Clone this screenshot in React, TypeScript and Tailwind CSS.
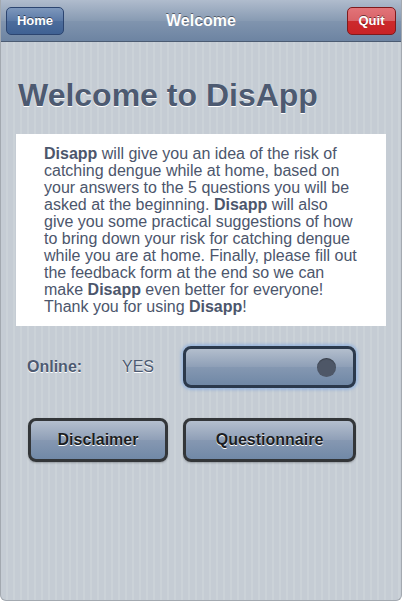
export default function App() {
  return (
    <div className="flex h-[601px] flex-col overflow-hidden rounded-b-[6px] border-x border-b border-[#a3a9b0] bg-[#cbd2d8] bg-[image:repeating-linear-gradient(90deg,#c5ccd4_0px,#c5ccd4_5px,#cbd2d8_5px,#cbd2d8_7px)] font-['Liberation_Sans',Arial,sans-serif]">
      {/* toolbar */}
      <div className="relative flex h-[42px] shrink-0 items-center justify-between border-b border-[#4b5b72] bg-[linear-gradient(#b0bccd,#889bb3_50%,#8195af_50%,#6d84a2)] px-[5px]">
        <button className="h-[28px] w-[58px] rounded-[5px] border border-[#2c4570] bg-[linear-gradient(#7d97bc,#5a79a6_50%,#4d6d9c_50%,#3f6193)] text-[13px] font-bold text-white [text-shadow:0_-1px_0_rgba(0,0,0,0.5)]">
          Home
        </button>
        <div className="pointer-events-none absolute left-0 right-0 top-[9px] text-center text-[16px] font-bold text-white [text-shadow:0_-1px_0_rgba(0,0,0,0.45)]">
          Welcome
        </div>
        <button className="h-[28px] w-[49px] rounded-[5px] border border-[#7e1a1c] bg-[linear-gradient(#e27479,#d86267_50%,#cc2a2c_50%,#c92326)] text-[13px] font-bold text-white [text-shadow:0_-1px_0_rgba(0,0,0,0.5)]">
          Quit
        </button>
      </div>

      <h1 className="mt-[36px] pl-[17px] text-[32px] font-bold leading-[35px] text-[#4d5a71] [text-shadow:0_1px_0_#ffffff]">
        Welcome to DisApp
      </h1>

      <div className="mx-[15px] mt-[21px] h-[192px] bg-white pl-[28px] pr-[27px] pt-[11px] text-[16px] leading-[17px] text-[#4c566c]">
        <p>
          <b>Disapp</b> will give you an idea of the risk of catching dengue while at home, based on your answers to the 5
          questions you will be asked at the beginning. <b>Disapp</b> will also give you some practical suggestions of how
          to bring down your risk for catching dengue while you are at home. Finally, please fill out the feedback form at
          the end so we can make <b>Disapp</b> even better for everyone! Thank you for using <b>Disapp</b>!
        </p>
      </div>

      <div className="mt-[20px] flex items-center pl-[26px]">
        <span className="w-[95px] text-[16px] font-bold text-[#4d5a71] [text-shadow:0_1px_0_#ffffff]">Online:</span>
        <span className="w-[61px] text-[16px] text-[#4d5a71] [text-shadow:0_1px_0_#ffffff]">YES</span>
        <div className="flex h-[42px] w-[173px] items-center justify-end rounded-[8px] border-[3px] border-[#2b394c] bg-[linear-gradient(#b3becd,#8e9fb7_50%,#8598b2_50%,#7088a6)] pr-[17px] shadow-[0_0_3px_2px_rgba(130,170,225,0.65)]">
          <span className="h-[19px] w-[19px] rounded-full bg-[#4e5767] shadow-[inset_0_1px_1px_rgba(0,0,0,0.3)]" />
        </div>
      </div>

      <div className="mt-[30px] flex gap-[15px] pl-[27px]">
        <button className="h-[44px] w-[140px] rounded-[8px] border-[3px] border-[#333639] bg-[linear-gradient(#b4bfce,#8f9fb7_50%,#8698b2_50%,#7189a7)] text-[16px] font-bold text-[#1b1d22] shadow-[0_1px_2px_rgba(0,0,0,0.25)] [text-shadow:0_1px_0_#ffffff]">
          Disclaimer
        </button>
        <button className="h-[44px] w-[173px] rounded-[8px] border-[3px] border-[#333639] bg-[linear-gradient(#b4bfce,#8f9fb7_50%,#8698b2_50%,#7189a7)] text-[16px] font-bold text-[#1b1d22] shadow-[0_1px_2px_rgba(0,0,0,0.25)] [text-shadow:0_1px_0_#ffffff]">
          Questionnaire
        </button>
      </div>
    </div>
  );
}
